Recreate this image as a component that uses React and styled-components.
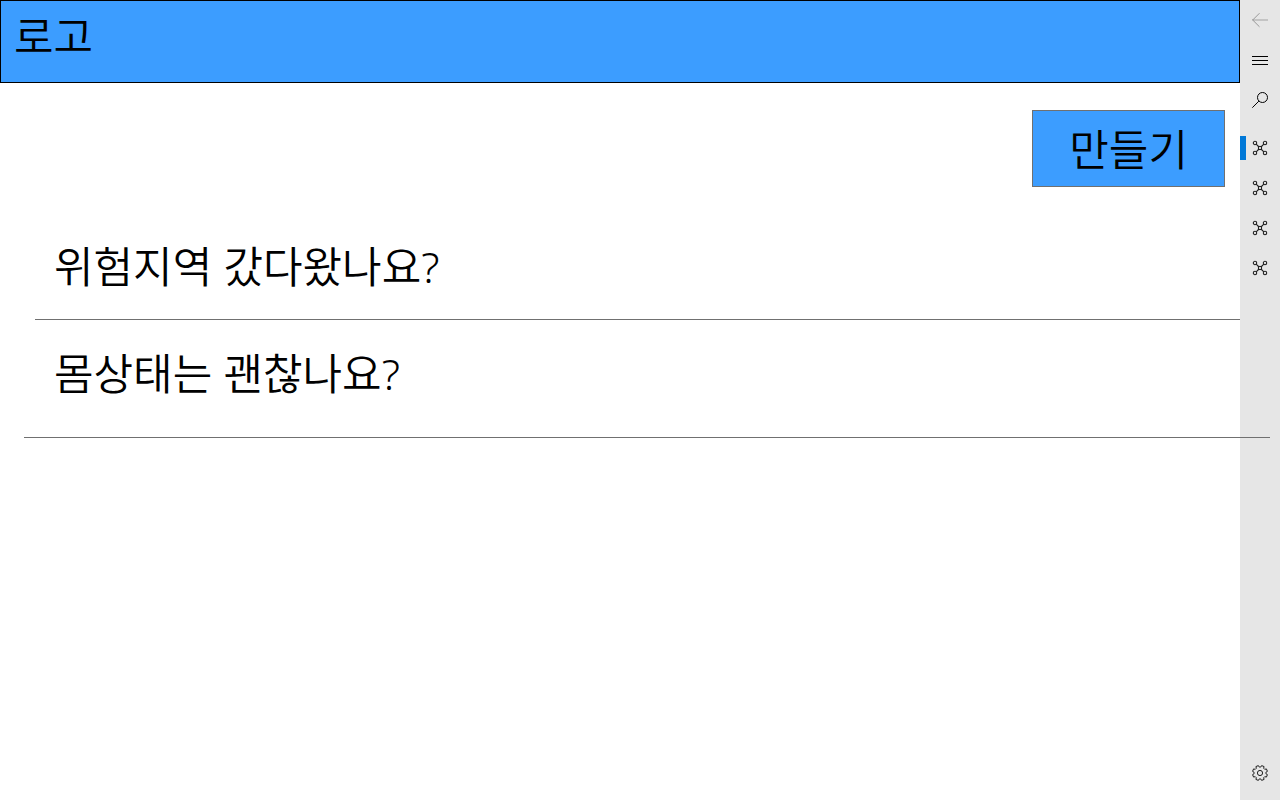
import React from "react";
import styled, { createGlobalStyle } from "styled-components";

const GlobalStyle = createGlobalStyle`
  * { box-sizing: border-box; }
  body {
    margin: 0;
    background: #fff;
    color: #000;
    font-family: "Noto Sans", "Noto Sans CJK KR", sans-serif;
    font-weight: 350;
    overflow-x: hidden;
  }
`;

const Page = styled.div`
  display: flex;
  min-height: 100vh;
`;

const Main = styled.main`
  flex: 1;
  min-width: 0;
`;

const Header = styled.header`
  padding: 4px 13px 13px;
  background: #3c9dff;
  border: 1px solid #000;
`;

const Logo = styled.h1`
  margin: 0;
  font-size: 43px;
  font-weight: inherit;
  line-height: 64px;
`;

const Actions = styled.div`
  display: flex;
  justify-content: flex-end;
  padding: 27px 15px 0;
`;

const CreateButton = styled.button`
  padding: 7px 36px 4px;
  background: #3c9dff;
  border: 1px solid #707070;
  color: #000;
  font: inherit;
  font-size: 43px;
  line-height: 64px;
  cursor: pointer;
`;

const Questions = styled.ul`
  margin: 44px 0 0;
  padding: 0;
  list-style: none;
`;

const Question = styled.li`
  position: relative;
  z-index: ${({ $wide }) => ($wide ? 1 : 0)};
  margin: ${({ $wide }) => ($wide ? "0 -30px 0 24px" : "0 0 0 35px")};
  padding: ${({ $wide }) => ($wide ? "22px 0 31px 30px" : "4px 0 20px 19px")};
  border-bottom: 1px solid #707070;
  font-size: 43px;
  line-height: 64px;
`;

const Rail = styled.nav`
  display: flex;
  flex-direction: column;
  flex: 0 0 40px;
  padding-bottom: 7px;
  background: #e6e6e6;
`;

const RailGroup = styled.div`
  display: flex;
  flex-direction: column;
  margin-top: ${({ $place }) =>
    $place === "end" ? "auto" : $place === "items" ? "8px" : "0"};
`;

const RailButton = styled.button`
  display: flex;
  align-items: center;
  justify-content: center;
  position: relative;
  height: 40px;
  padding: 0;
  border: 0;
  background: transparent;
  color: #000;

  &[aria-current="page"]::before {
    content: "";
    position: absolute;
    left: 0;
    top: 8px;
    width: 6px;
    height: 24px;
    background: #0078d7;
  }
`;

const Glyph = styled.svg`
  display: block;
  width: 16px;
  height: 16px;
  fill: none;
  stroke: currentColor;
`;

const BackIcon = () => (
  <Glyph viewBox="0 0 16 16" aria-hidden="true">
    <path d="M0 8H16" strokeWidth="2" stroke="#c4c4c4" />
    <path d="M7.5 1.2L0.7 8L7.5 14.8" stroke="#989898" />
  </Glyph>
);

const MenuIcon = () => (
  <Glyph viewBox="0 0 16 16" aria-hidden="true">
    <path d="M0 4.5H16M0 8.5H16M0 12.5H16" />
  </Glyph>
);

const SearchIcon = () => (
  <Glyph viewBox="0 0 16 16" aria-hidden="true">
    <circle cx="10.5" cy="5.5" r="5" />
    <path d="M6.9 9.1L0.3 15.7" />
  </Glyph>
);

const NodesIcon = () => (
  <Glyph viewBox="0 0 16 16" aria-hidden="true">
    <g stroke="#222" strokeWidth="1.1">
      <circle cx="3" cy="3" r="1.7" />
      <circle cx="13" cy="3" r="1.7" />
      <circle cx="3" cy="13" r="1.7" />
      <circle cx="13" cy="13" r="1.7" />
      <rect x="6.5" y="6.5" width="3" height="3" />
      <path d="M4.2 4.2L6.5 6.5M11.8 4.2L9.5 6.5M4.2 11.8L6.5 9.5M11.8 11.8L9.5 9.5" />
    </g>
  </Glyph>
);

const gearPath = (() => {
  const points = [];
  for (let i = 0; i < 8; i += 1) {
    const base = i * 45 + 22.5;
    [[-15, 6], [-10, 7.6], [10, 7.6], [15, 6]].forEach(([turn, r]) => {
      const a = ((base + turn) * Math.PI) / 180;
      points.push(`${(8 + r * Math.cos(a)).toFixed(2)} ${(8 + r * Math.sin(a)).toFixed(2)}`);
    });
  }
  return `M${points.join("L")}Z`;
})();

const GearIcon = () => (
  <Glyph viewBox="0 0 16 16" aria-hidden="true">
    <g stroke="#222">
      <path d={gearPath} strokeLinejoin="round" />
      <circle cx="8" cy="8" r="2.6" />
    </g>
  </Glyph>
);

const pages = ["1", "2", "3", "4"];

export default function App() {
  return (
    <>
      <GlobalStyle />
      <Page>
        <Main>
          <Header>
            <Logo>로고</Logo>
          </Header>
          <Actions>
            <CreateButton type="button">만들기</CreateButton>
          </Actions>
          <Questions>
            <Question>위험지역 갔다왔나요?</Question>
            <Question $wide>몸상태는 괜찮나요?</Question>
          </Questions>
        </Main>
        <Rail>
          <RailGroup>
            <RailButton type="button" disabled aria-label="뒤로"><BackIcon /></RailButton>
            <RailButton type="button" aria-label="메뉴"><MenuIcon /></RailButton>
            <RailButton type="button" aria-label="검색"><SearchIcon /></RailButton>
          </RailGroup>
          <RailGroup $place="items">
            {pages.map((page, index) => (
              <RailButton
                key={page}
                type="button"
                aria-label={`페이지 ${page}`}
                aria-current={index === 0 ? "page" : undefined}
              >
                <NodesIcon />
              </RailButton>
            ))}
          </RailGroup>
          <RailGroup $place="end">
            <RailButton type="button" aria-label="설정"><GearIcon /></RailButton>
          </RailGroup>
        </Rail>
      </Page>
    </>
  );
}
